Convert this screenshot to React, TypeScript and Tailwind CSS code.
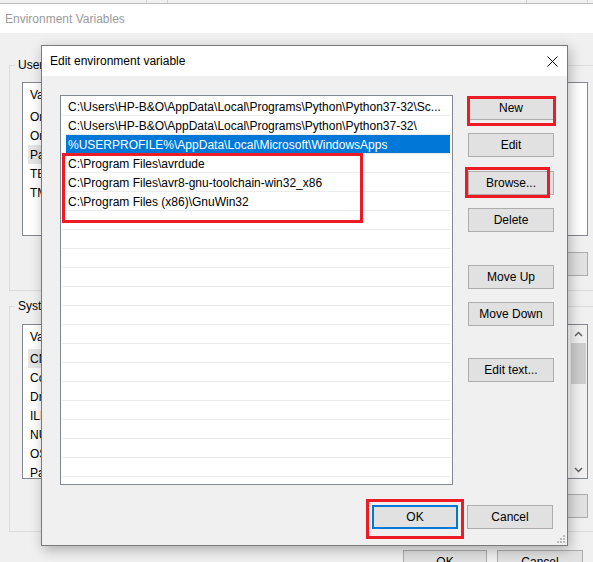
import React from "react";

const userVars = ["OneDrive", "OneDriveConsumer", "Path", "TEMP", "TMP"];
const sysVars = ["CNC_HOME", "ComSpec", "DriverData", "ILEVEL", "NUMBER_OF_PROCESSORS", "OS", "Path", "PATHEXT"];

const paths = [
  "C:\\Users\\HP-B&O\\AppData\\Local\\Programs\\Python\\Python37-32\\Sc...",
  "C:\\Users\\HP-B&O\\AppData\\Local\\Programs\\Python\\Python37-32\\",
  "%USERPROFILE%\\AppData\\Local\\Microsoft\\WindowsApps",
  "C:\\Program Files\\avrdude",
  "C:\\Program Files\\avr8-gnu-toolchain-win32_x86",
  "C:\\Program Files (x86)\\GnuWin32",
];

const WinButton = ({ label, className = "" }: { label: string; className?: string }) => (
  <div
    className={`flex h-[24px] items-center justify-center border border-[#adadad] bg-[#e1e1e1] text-black ${className}`}
  >
    {label}
  </div>
);

const RedBox = ({ className }: { className: string }) => (
  <div className={`pointer-events-none absolute border-[3px] border-[#ed1c24] ${className}`} />
);

const BgList = ({
  rows,
  highlight,
  scroll,
  h,
}: {
  rows: string[];
  highlight: number;
  scroll?: boolean;
  h: string;
}) => (
  <div className={`ml-[12px] flex w-[566px] overflow-hidden border border-[#828790] bg-white ${h}`}>
    <div className="flex-1">
      <div className="flex h-[24px] items-center pl-[7px]">Variable</div>
      {rows.map((r, i) => (
        <div
          key={r}
          className={`ml-[5px] flex h-[19px] w-[500px] items-center pl-[2px] ${i === highlight ? "bg-[#e5e5e5]" : ""}`}
        >
          {r}
        </div>
      ))}
    </div>
    {scroll && (
      <div className="flex w-[17px] flex-col bg-[#f0f0f0]">
        <div className="flex h-[17px] items-center justify-center">
          <svg width="9" height="6" viewBox="0 0 9 6">
            <path d="M1 5 L4.5 1.5 L8 5" stroke="#606060" strokeWidth="1.5" fill="none" />
          </svg>
        </div>
        <div className="mx-[1px] mt-[1px] h-[41px] bg-[#cdcdcd]" />
        <div className="flex-1" />
        <div className="flex h-[17px] items-center justify-center">
          <svg width="9" height="6" viewBox="0 0 9 6">
            <path d="M1 1 L4.5 4.5 L8 1" stroke="#606060" strokeWidth="1.5" fill="none" />
          </svg>
        </div>
      </div>
    )}
  </div>
);

const BgButtons = ({ mt }: { mt: string }) => (
  <div className={`ml-[12px] flex w-[566px] justify-end gap-[8px] ${mt}`}>
    <WinButton label="New..." className="h-[23px] w-[75px]" />
    <WinButton label="Edit..." className="h-[23px] w-[75px]" />
    <WinButton label="Delete" className="h-[23px] w-[75px]" />
  </div>
);

const BackgroundWindow = () => (
  <div className="w-[610px]">
    {/* strip of the window above */}
    <div className="flex h-[4px] border-b border-[#bdbdbd] bg-[#f0f0f0]">
      <div className="w-[147px] border-r border-[#d0d0d0]" />
      <div className="w-[21px] border-r border-[#d0d0d0]" />
      <div className="w-[359px] border-r border-[#d0d0d0]" />
      <div className="w-[61px] border-r border-[#d0d0d0]" />
    </div>
    <div className="flex h-[29px] items-center bg-white pl-[5px] text-[#9a9a9a]">Environment Variables</div>

    <fieldset className="ml-[9px] mt-[24px] w-[592px] border border-[#dcdcdc] pb-[14px]">
      <legend className="ml-[5px] px-[3px] leading-[16px]">User variables for HP-B&amp;O</legend>
      <div className="mt-[9px]">
        <BgList rows={userVars} highlight={2} h="h-[154px]" />
      </div>
      <BgButtons mt="mt-[16px]" />
    </fieldset>

    <fieldset className="ml-[9px] mt-[7px] w-[592px] border border-[#dcdcdc] pb-[13px]">
      <legend className="ml-[5px] px-[3px] leading-[16px]">System variables</legend>
      <div className="mt-[10px]">
        <BgList rows={sysVars} highlight={0} scroll h="h-[155px]" />
      </div>
      <BgButtons mt="mt-[15px]" />
    </fieldset>

    <div className="ml-[403px] mt-[18px] flex gap-[10px]">
      <WinButton label="OK" className="w-[84px]" />
      <WinButton label="Cancel" className="w-[86px]" />
    </div>
  </div>
);

const EditDialog = () => (
  <div className="absolute left-[41px] top-[45px] flex h-[501px] w-[527px] flex-col border border-[#7a7a7a] bg-[#f0f0f0] shadow-[2px_4px_12px_rgba(0,0,0,0.28)]">
    {/* Title bar */}
    <div className="flex h-[30px] items-center justify-between bg-white pl-[8px] pr-[9px] text-black">
      <span>Edit environment variable</span>
      <svg width="11" height="11" viewBox="0 0 11 11">
        <path d="M0.5 0.5 L10.5 10.5 M10.5 0.5 L0.5 10.5" stroke="#000" strokeWidth="1" />
      </svg>
    </div>

    <div className="flex pl-[18px] pt-[19px]">
      {/* Path list */}
      <div className="relative h-[390px] w-[393px] overflow-hidden border border-[#828790] bg-white pt-[1px]">
        {Array.from({ length: 21 }).map((_, i) => (
          <div key={i} className="mx-[1px] h-[19px] border-b border-[#ececec]">
            {i === 2 ? (
              <div className="ml-[4px] mr-[1px] flex h-full items-center whitespace-nowrap bg-[#0078d7] pl-[2px] pt-[1px] text-white">
                {paths[i]}
              </div>
            ) : (
              <div className="flex h-full items-center overflow-hidden whitespace-nowrap pl-[6px] pt-[1px] text-black">
                {paths[i] ?? ""}
              </div>
            )}
          </div>
        ))}
        <RedBox className="left-[1px] top-[57px] h-[70px] w-[301px]" />
      </div>

      {/* Action buttons */}
      <div className="ml-[15px] flex w-[86px] flex-col pt-[1px]">
        <div className="relative">
          <WinButton label="New" />
          <RedBox className="-left-[1px] top-0 h-[30px] w-[89px]" />
        </div>
        <WinButton label="Edit" className="mt-[13px]" />
        <div className="relative mt-[14px]">
          <WinButton label="Browse..." />
          <RedBox className="-left-[3px] -top-[4px] h-[31px] w-[85px]" />
        </div>
        <WinButton label="Delete" className="mt-[13px]" />
        <WinButton label="Move Up" className="mt-[33px]" />
        <WinButton label="Move Down" className="mt-[13px]" />
        <WinButton label="Edit text..." className="mt-[32px]" />
      </div>
    </div>

    {/* Footer */}
    <div className="mt-[20px] flex justify-end gap-[9px] pr-[14px]">
      <div className="relative">
        <div className="flex h-[24px] w-[86px] items-center justify-center border-2 border-[#0078d7] bg-[#e1e1e1] text-black">
          OK
        </div>
        <RedBox className="-left-[6px] -top-[6px] h-[40px] w-[98px]" />
      </div>
      <WinButton label="Cancel" className="w-[86px]" />
    </div>

    {/* Resize grip */}
    <svg className="absolute bottom-[2px] right-[2px]" width="8" height="8" viewBox="0 0 8 8">
      <rect x="6" y="0" width="2" height="2" fill="#bcbcbc" />
      <rect x="3" y="3" width="2" height="2" fill="#bcbcbc" />
      <rect x="6" y="3" width="2" height="2" fill="#bcbcbc" />
      <rect x="0" y="6" width="2" height="2" fill="#bcbcbc" />
      <rect x="3" y="6" width="2" height="2" fill="#bcbcbc" />
      <rect x="6" y="6" width="2" height="2" fill="#bcbcbc" />
    </svg>
  </div>
);

export default function App() {
  return (
    <div className="relative h-[562px] w-[593px] overflow-hidden bg-[#f0f0f0] font-['Liberation_Sans',Arial,sans-serif] text-[12px] text-black">
      <BackgroundWindow />
      <EditDialog />
    </div>
  );
}
